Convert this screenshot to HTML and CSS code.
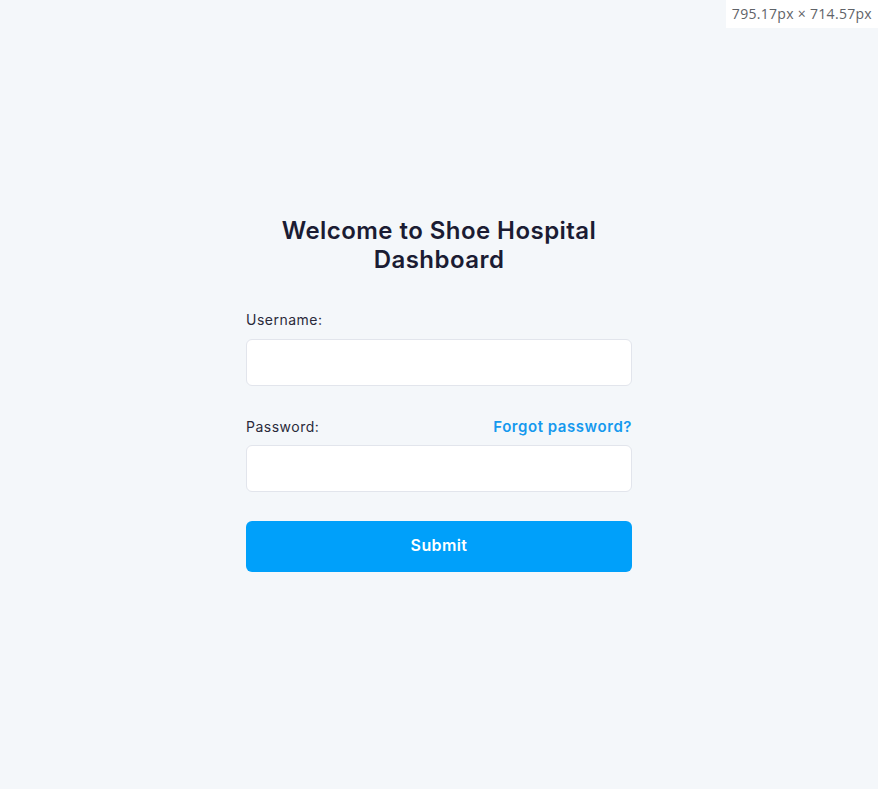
FILE: index.html
```html
<!DOCTYPE html>
<html lang="en">
<head>
<meta charset="utf-8">
<title>Shoe Hospital Dashboard</title>
<link rel="stylesheet" href="styles.css">
</head>
<body>
<div class="size-badge">795.17px × 714.57px</div>
<main class="page">
  <form class="login">
    <h1 class="title">Welcome to Shoe Hospital Dashboard</h1>
    <div class="field">
      <label class="label" for="username">Username:</label>
      <input class="input" id="username" type="text">
    </div>
    <div class="field">
      <div class="label-row">
        <label class="label" for="password">Password:</label>
        <a class="forgot" href="#">Forgot password?</a>
      </div>
      <input class="input" id="password" type="password">
    </div>
    <button class="submit" type="button">Submit</button>
  </form>
</main>
</body>
</html>
```
FILE: styles.css
```css
* { box-sizing: border-box; }
html, body { margin: 0; height: 100%; }
body {
  background: #f4f7fa;
  font-family: Inter, "Noto Sans", sans-serif;
  color: #1b1c33;
}
.size-badge {
  position: absolute;
  top: 0;
  right: 0;
  background: #ffffff;
  color: #5f6368;
  font-family: "Open Sans", sans-serif;
  font-size: 14px;
  line-height: 28px;
  letter-spacing: 0.3px;
  padding: 0 6px 0 6px;
}
.page {
  min-height: 100%;
  display: flex;
  align-items: center;
  justify-content: center;
}
.login {
  width: 386px;
  display: flex;
  flex-direction: column;
}
.title {
  margin: 0 auto 35px;
  width: 340px;
  text-align: center;
  font-size: 24px;
  line-height: 29px;
  font-weight: 600;
  letter-spacing: 0.45px;
  color: #1b1c33;
  position: relative;
  top: -1px;
}
.field {
  display: flex;
  flex-direction: column;
  gap: 9px;
  margin-bottom: 30px;
}
.label-row {
  display: flex;
  justify-content: space-between;
  align-items: center;
}
.label {
  font-size: 14px;
  line-height: 20px;
  letter-spacing: 0.5px;
  color: #2a2a3a;
}
.label-row .label {
  position: relative;
  top: 1px;
}
.forgot {
  font-size: 15px;
  line-height: 20px;
  font-weight: 600;
  letter-spacing: 0.55px;
  color: #1599ee;
  text-decoration: none;
  position: relative;
  top: 1px;
}
.input {
  height: 47px;
  border: 1px solid #e2e5ec;
  border-radius: 6px;
  background: #ffffff;
  font: inherit;
  padding: 0 12px;
}
.submit {
  margin-top: -1px;
  height: 51px;
  border: none;
  border-radius: 6px;
  background: #00a0fa;
  color: #ffffff;
  font-family: inherit;
  font-size: 16px;
  font-weight: 600;
  letter-spacing: 0.4px;
  padding-bottom: 4px;
  cursor: pointer;
}
```
